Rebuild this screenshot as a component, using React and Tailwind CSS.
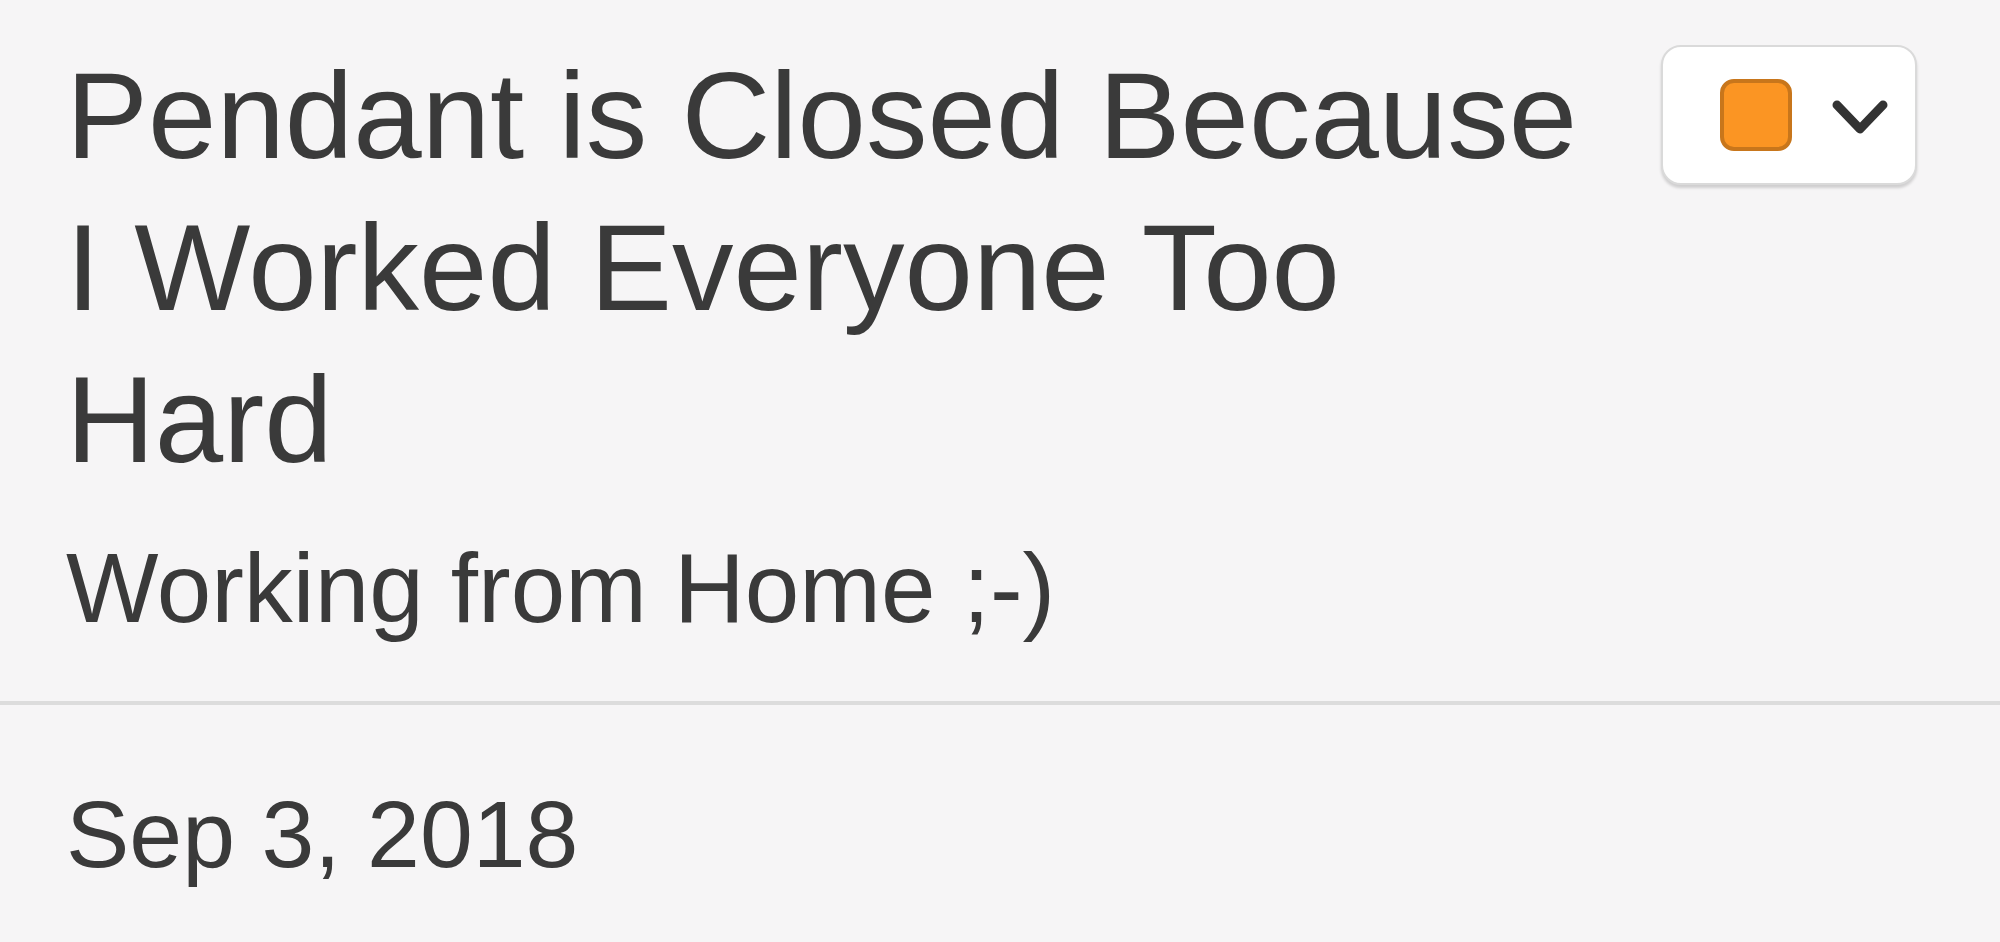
import React from 'react';

const ColorPicker = ({ color = '#fb9523', edge = '#c8761b' }) => (
    <button className="shrink-0 w-[256px] h-[140px] bg-white rounded-[20px] border-2 border-[#dadada] shadow-[0_3px_3px_rgba(0,0,0,0.16)] flex items-center pl-[57px] gap-[40px]">
        <span
            className="w-[72px] h-[72px] rounded-[14px] border-[4px] block"
            style={{ backgroundColor: color, borderColor: edge }}
        />
        <svg width="56" height="36" viewBox="0 0 56 36" className="mt-[4px]">
            <polyline
                points="5,6 28,30 51,6"
                fill="none"
                stroke="#333333"
                strokeWidth="9"
                strokeLinecap="round"
                strokeLinejoin="round"
            />
        </svg>
    </button>
);

const App = () => {
    return (
        <div className="w-full h-[942px] bg-[#f6f5f6] text-[#3a3a3a] font-['Liberation_Sans',Arial,sans-serif] overflow-hidden">
            {/* Header: status title, message and colour menu */}
            <div className="flex items-start gap-[60px] pl-[66px] pr-[83px] pt-[40px]">
                <div className="flex-1 min-w-0">
                    <h1 className="text-[123px] leading-[152px] font-normal">
                        Pendant is Closed Because I Worked Everyone Too Hard
                    </h1>
                    <p className="mt-[34px] text-[98px] leading-[116px]">Working from Home ;-)</p>
                </div>
                <div className="pt-[5px]">
                    <ColorPicker />
                </div>
            </div>

            <div className="mt-[55px] h-[4px] bg-[#dcdcdc]" />

            <div className="pl-[66px] mt-[72px] text-[95px] leading-[114px]">Sep 3, 2018</div>
        </div>
    );
};

export default App;
